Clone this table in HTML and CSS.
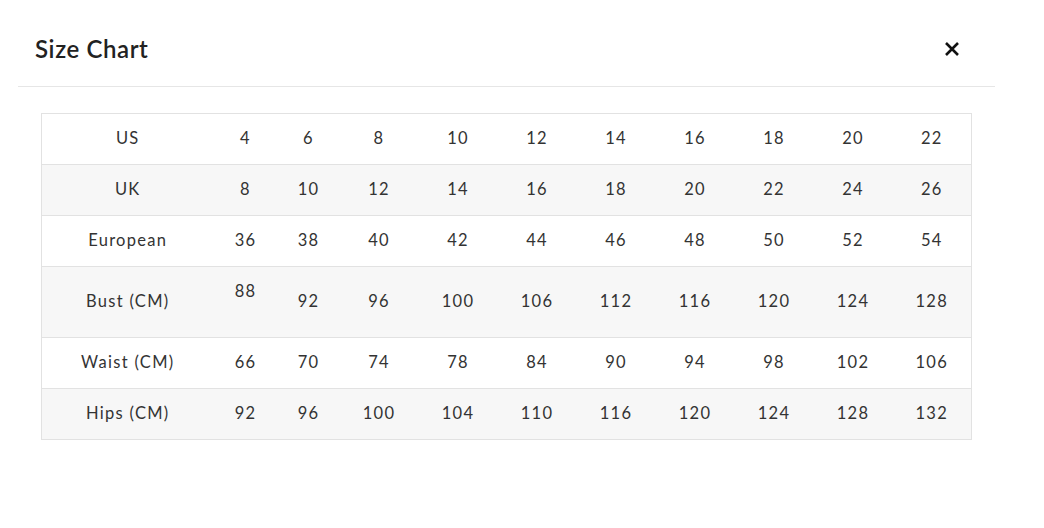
FILE: index.html
```html
<!DOCTYPE html>
<html lang="en">
<head>
<meta charset="utf-8">
<title>Size Chart</title>
<link rel="stylesheet" href="styles.css">
</head>
<body>
<div class="modal">
  <div class="modal-header">
    <h2 class="modal-title">Size Chart</h2>
    <button class="close" aria-label="Close">
      <svg width="16" height="16" viewBox="0 0 16 16"><path d="M2 2L14 14M14 2L2 14" stroke="#111" stroke-width="2.6" stroke-linecap="butt"/></svg>
    </button>
  </div>
  <table class="chart">
    <colgroup>
      <col class="c-label"><col class="c-a"><col class="c-b"><col class="c-n"><col class="c-n"><col class="c-n"><col class="c-n"><col class="c-n"><col class="c-n"><col class="c-n"><col class="c-n">
    </colgroup>
    <tbody>
      <tr><td>US</td><td>4</td><td>6</td><td>8</td><td>10</td><td>12</td><td>14</td><td>16</td><td>18</td><td>20</td><td>22</td></tr>
      <tr class="alt"><td>UK</td><td>8</td><td>10</td><td>12</td><td>14</td><td>16</td><td>18</td><td>20</td><td>22</td><td>24</td><td>26</td></tr>
      <tr><td>European</td><td>36</td><td>38</td><td>40</td><td>42</td><td>44</td><td>46</td><td>48</td><td>50</td><td>52</td><td>54</td></tr>
      <tr class="alt"><td>Bust (CM)</td><td class="raised">88</td><td>92</td><td>96</td><td>100</td><td>106</td><td>112</td><td>116</td><td>120</td><td>124</td><td>128</td></tr>
      <tr><td>Waist (CM)</td><td>66</td><td>70</td><td>74</td><td>78</td><td>84</td><td>90</td><td>94</td><td>98</td><td>102</td><td>106</td></tr>
      <tr class="alt"><td>Hips (CM)</td><td>92</td><td>96</td><td>100</td><td>104</td><td>110</td><td>116</td><td>120</td><td>124</td><td>128</td><td>132</td></tr>
    </tbody>
  </table>
</div>
</body>
</html>
```

FILE: styles.css
```css
html, body {
  margin: 0;
  padding: 0;
  background: #fff;
}

body {
  font-family: Lato, "Noto Sans", "Liberation Sans", sans-serif;
  color: #333;
}

.modal {
  margin-left: 18px;
  width: 977px;
}

.modal-header {
  box-sizing: border-box;
  height: 87px;
  padding: 10px 35px 0 17px;
  display: flex;
  align-items: center;
  justify-content: space-between;
  border-bottom: 1px solid #e6e6e6;
}

.modal-title {
  margin: 0;
  font-size: 24px;
  font-weight: 600;
  color: #222;
  letter-spacing: 0.6px;
}

.close {
  border: 0;
  background: none;
  padding: 0;
  margin-top: 2px;
  width: 16px;
  height: 16px;
  display: flex;
  cursor: pointer;
}

.chart {
  margin: 26px 0 0 23px;
  border-collapse: collapse;
  border: 1px solid #e2e2e2;
  table-layout: fixed;
  width: 931px;
}

.c-label { width: 172px; }
.c-a { width: 64px; }
.c-b { width: 62px; }
.c-n { width: 79px; }

.chart td {
  padding: 14px 0 16px;
  line-height: 20px;
  font-size: 16.5px;
  text-align: center;
  letter-spacing: 1.3px;
  border-bottom: 1px solid #e2e2e2;
  color: #333;
}

.chart tr.alt td {
  background: #f7f7f7;
}

.chart td.raised {
  padding-bottom: 36px;
}
```
